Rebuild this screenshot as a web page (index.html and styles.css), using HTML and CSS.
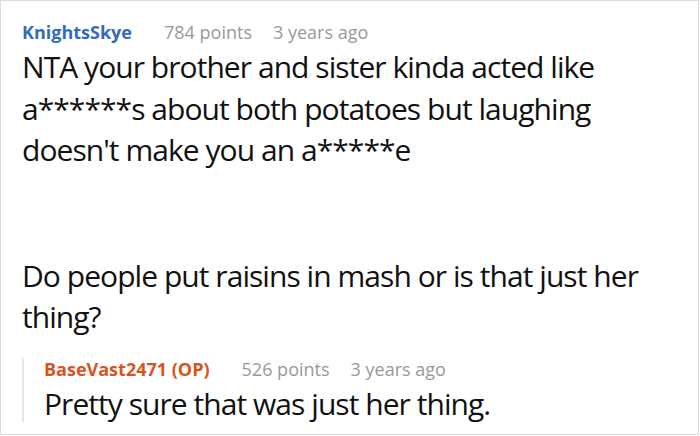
FILE: index.html
```html
<!DOCTYPE html>
<html>
<head>
<meta charset="utf-8">
<link rel="stylesheet" href="styles.css">
</head>
<body>
<div class="frame">
  <div class="comment">
    <div class="meta">
      <span class="author">KnightsSkye</span>
      <span class="info">784 points</span>
      <span class="info">3 years ago</span>
    </div>
    <div class="body">
      <p>NTA your brother and sister kinda acted like a******s about both potatoes but laughing doesn't make you an a*****e</p>
      <p>Do people put raisins in mash or is that just her thing?</p>
    </div>
    <div class="reply">
      <div class="meta">
        <span class="author op">BaseVast2471 (OP)</span>
        <span class="info">526 points</span>
        <span class="info">3 years ago</span>
      </div>
      <div class="body">
        <p>Pretty sure that was just her thing.</p>
      </div>
    </div>
  </div>
</div>
</body>
</html>
```

FILE: styles.css
```css
html, body {
  margin: 0;
  padding: 0;
  background: #fff;
}
.frame {
  width: 699px;
  height: 435px;
  box-sizing: border-box;
  border: 1px solid #dcdcdc;
  overflow: hidden;
  font-family: "Open Sans", "Noto Sans", sans-serif;
}
.comment {
  padding: 19px 0 0 21px;
}
.meta {
  display: flex;
  gap: 21px;
  font-size: 18px;
  line-height: 24px;
  align-items: baseline;
}
.author {
  font-weight: 700;
  color: #336bbb;
  margin-right: 11px;
}
.author.op {
  color: #d9531e;
}
.info {
  color: #999;
}
.body {
  font-size: 30px;
  letter-spacing: -0.95px;
  line-height: 41.7px;
  color: #111;
  margin-top: 2px;
}
.body p {
  margin: 0 0 83.4px 0;
  width: 640px;
}
.body p:last-child {
  margin-bottom: 0;
}
.reply {
  margin-top: 20px;
  border-left: 2px solid #e6e6e6;
  padding-left: 20px;
}
.reply .meta {
  line-height: 22px;
}
.reply .body {
  margin-top: 6px;
  line-height: 36px;
}
```
